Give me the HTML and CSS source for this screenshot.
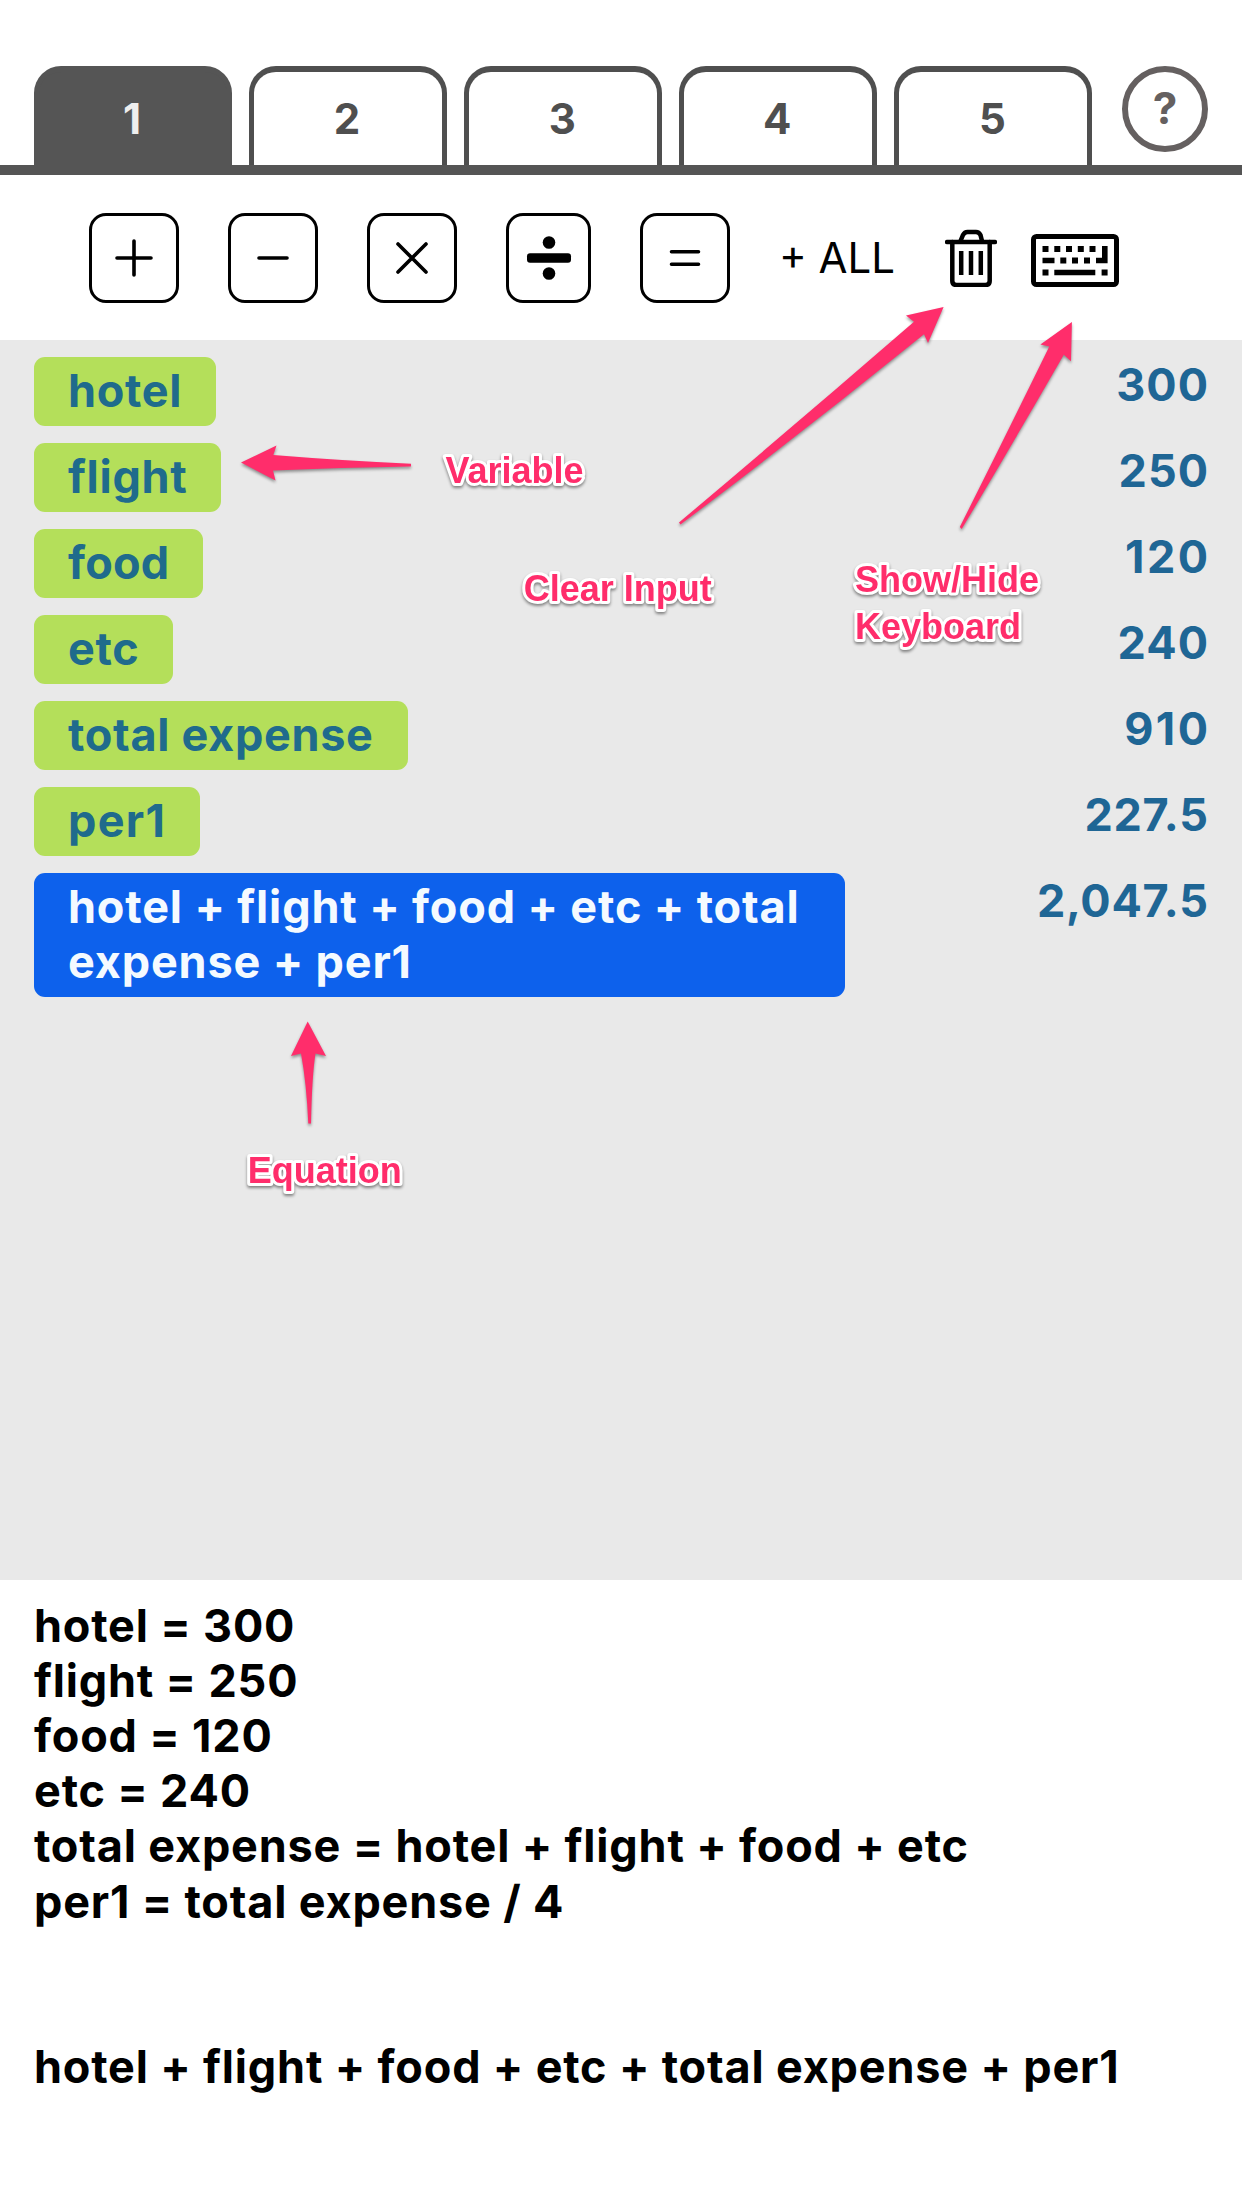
FILE: index.html
```html
<!DOCTYPE html>
<html lang="en">
<head>
<meta charset="utf-8">
<title>Variable Calculator</title>
<link rel="stylesheet" href="styles.css">
</head>
<body>
<div class="app">
  <header class="tabs">
    <nav class="tab-list">
      <div class="tab active">1</div>
      <div class="tab">2</div>
      <div class="tab">3</div>
      <div class="tab">4</div>
      <div class="tab">5</div>
    </nav>
    <div class="help">?</div>
  </header>

  <div class="toolbar">
    <div class="op"><svg width="40" height="40" viewBox="0 0 40 40"><path d="M3 20H37M20 3V37"/></svg></div>
    <div class="op"><svg width="40" height="40" viewBox="0 0 40 40"><path d="M6 20H34"/></svg></div>
    <div class="op"><svg width="40" height="40" viewBox="0 0 40 40"><path d="M6 6L34 34M34 6L6 34"/></svg></div>
    <div class="op divide"><svg width="46" height="46" viewBox="0 0 46 46"><rect x="1" y="18.300" width="44" height="9.400" rx="3"/><circle cx="23" cy="7.500" r="6.300"/><circle cx="23" cy="38.500" r="6.300"/></svg></div>
    <div class="op"><svg width="40" height="40" viewBox="0 0 40 40"><path d="M6.500 13.700H33.500M6.500 26.300H33.500"/></svg></div>
    <div class="all">+ ALL</div>
    <svg class="trash" width="52" height="58" viewBox="0 0 52 58">
      <path d="M2 13H50"/>
      <path d="M15.500 12L18 6Q19.500 3 22.500 3H31Q34 3 35.500 6L37 12"/>
      <path d="M7.300 13V52Q7.300 56 11.500 56H40.500Q44.700 56 44.700 52V13"/>
      <path class="slats" d="M16.200 22V46M26 22V46M35.800 22V46"/>
    </svg>
    <svg class="keyboard" width="88" height="53" viewBox="0 0 88 53">
      <rect class="frame" x="2.500" y="2.500" width="83" height="48" rx="3"/>
      <path d="M11.500 12h6v6h-6zM23.300 12h6v6h-6zM35 12h6v6h-6zM46.800 12h6v6h-6zM58.500 12h6v6h-6z"/>
      <path d="M11.500 23.700h12v5.600h-12zM29.300 23.500h6v6h-6zM41 23.500h6v6h-6zM53 23.500h6v6h-6z"/>
      <path d="M71 12h5.600v17.300H65v-5.600h6z"/>
      <path d="M11.500 35.500h6v6h-6zM23.300 35.700h41v5.600h-41zM70.600 35.500h6v6h-6z"/>
    </svg>
  </div>

  <main class="results">
    <div class="row"><div class="chip">hotel</div><div class="value">300</div></div>
    <div class="row"><div class="chip">flight</div><div class="value">250</div></div>
    <div class="row"><div class="chip snug">food</div><div class="value loose">120</div></div>
    <div class="row"><div class="chip">etc</div><div class="value">240</div></div>
    <div class="row"><div class="chip">total expense</div><div class="value loose">910</div></div>
    <div class="row"><div class="chip wide">per1</div><div class="value decimal">227.5</div></div>
    <div class="row"><div class="chip equation">hotel + flight + food + etc + total expense + per1</div><div class="value decimal">2,047.5</div></div>
  </main>

  <section class="input">
    <p>hotel = 300</p>
    <p>flight = 250</p>
    <p>food = 120</p>
    <p>etc = 240</p>
    <p>total expense = hotel + flight + food + etc</p>
    <p>per1 = total expense / 4</p>
    <p class="gap">hotel + flight + food + etc + total expense + per1</p>
  </section>

  <svg class="notes" width="1242" height="2208" viewBox="0 0 1242 2208">
    <g class="arrows">
      <path d="M241 462.500L276.500 445.500L273.300 455Q340 460.500 411 463.700V466.500Q340 467.500 273 470.500L275.500 480.500Z"/>
      <path d="M943.600 307L906 315.500L914 321.700Q796 424 679 522.500L680.500 524.500Q802 433 924 334.300L928 343Z"/>
      <path d="M1071.900 322L1040.400 344.500L1049.300 346.500Q1005 437 959.800 527L961.700 529Q1013 443 1063.800 354.700L1071 361.300Z"/>
      <path d="M307.700 1021.500L291 1056L301 1053.500Q306.500 1083 308.300 1123.500H311Q312 1075 315.500 1053.500L326 1056Z"/>
    </g>
    <g class="labels">
      <text x="445.500" y="482.700">Variable</text>
      <text x="523.700" y="600.700">Clear Input</text>
      <text x="855" y="591.700">Show/Hide</text>
      <text x="855" y="638.700">Keyboard</text>
      <text x="247.700" y="1183">Equation</text>
    </g>
  </svg>
</div>
</body>
</html>
```
FILE: styles.css
```css
* { box-sizing: border-box; }

body {
  margin: 0;
  background: #fff;
  font-family: Inter, "Liberation Sans", sans-serif;
}

.app {
  position: relative;
  width: 1242px;
  height: 2208px;
  overflow: hidden;
  display: flex;
  flex-direction: column;
}

/* Tabs */
.tabs {
  flex: none;
  height: 175px;
  padding: 66px 34px 0;
  border-bottom: 10px solid #555;
  display: flex;
  justify-content: space-between;
}

.tab-list {
  display: flex;
  gap: 17.100px;
}

.tab {
  width: 198px;
  height: 99px;
  border: 5px solid #4f4f4f;
  border-top-width: 6px;
  border-bottom: 0;
  border-radius: 27px 27px 0 0;
  color: #4f4f4f;
  font-size: 42px;
  font-weight: 700;
  line-height: 50px;
  padding: 22px 2px 0 0;
  text-align: center;
}

.tab.active {
  background: #555;
  border-color: #555;
  color: #eee;
}

.help {
  width: 86px;
  height: 86px;
  border: 6px solid #656060;
  border-radius: 50%;
  color: #656060;
  font-size: 44px;
  font-weight: 700;
  line-height: 72px;
  text-align: center;
}

/* Operators */
.toolbar {
  flex: none;
  height: 165px;
  padding-left: 89px;
  display: flex;
  align-items: center;
  gap: 49px;
}

.op {
  width: 90px;
  height: 90px;
  border: 3px solid #000;
  border-radius: 17px;
  display: flex;
  align-items: center;
  justify-content: center;
}

.op path {
  fill: none;
  stroke: #000;
  stroke-width: 3.6;
  stroke-linecap: round;
}

.divide { width: 85px; }

.all {
  font-size: 42px;
  line-height: 50px;
  padding-top: 1px;
  white-space: nowrap;
}

.trash {
  margin-left: 1px;
}

.trash path {
  fill: none;
  stroke: #000;
  stroke-width: 4.500;
  stroke-linecap: round;
}

.trash .slats { stroke-linecap: butt; }

.keyboard {
  margin: 6px 0 0 -15px;
}

.keyboard .frame {
  fill: none;
  stroke: #000;
  stroke-width: 5;
}

/* Results */
.results {
  flex: none;
  height: 1240px;
  padding: 17px 34px 0;
  background: #e9e9e9;
  display: flex;
  flex-direction: column;
  gap: 17px;
}

.row {
  display: flex;
  justify-content: space-between;
  align-items: flex-start;
}

.chip {
  max-width: 811px;
  padding: 6px 34px 8px;
  border-radius: 11px;
  background: #b4df5a;
  color: #1f6b8c;
  font-size: 45px;
  font-weight: 700;
  line-height: 55px;
  letter-spacing: 0.700px;
}

.chip.snug { letter-spacing: 0.200px; }
.chip.wide { letter-spacing: 1.300px; }

.chip.equation {
  width: 811px;
  background: #0d61ec;
  color: #f4faff;
  letter-spacing: 0.850px;
}

.value {
  color: #1f6695;
  font-size: 45px;
  font-weight: 700;
  line-height: 55px;
  letter-spacing: 1px;
  margin-right: -1px;
}

.value.loose {
  letter-spacing: 2.400px;
  margin-right: -2.400px;
}

.value.decimal {
  letter-spacing: 0.700px;
  margin-right: -0.700px;
}

/* Typed input */
.input {
  padding: 17.500px 34px 0;
  color: #000;
  font-size: 45px;
  font-weight: 700;
  line-height: 55.200px;
  letter-spacing: 0.820px;
  white-space: nowrap;
}

.input p { margin: 0; }
.input .gap { margin-top: 110.400px; }

/* Annotations */
.notes {
  position: absolute;
  top: 0;
  left: 0;
}

.arrows {
  fill: #ff2d6b;
  filter: drop-shadow(0 2px 1.500px rgba(0, 0, 0, 0.4));
}

.labels {
  fill: #ff2d6b;
  stroke: #fff;
  stroke-width: 6px;
  stroke-linejoin: round;
  paint-order: stroke;
  font: 700 36px "Liberation Sans", Arial, sans-serif;
  filter: drop-shadow(0 2px 1.500px rgba(0, 0, 0, 0.45));
}
```
